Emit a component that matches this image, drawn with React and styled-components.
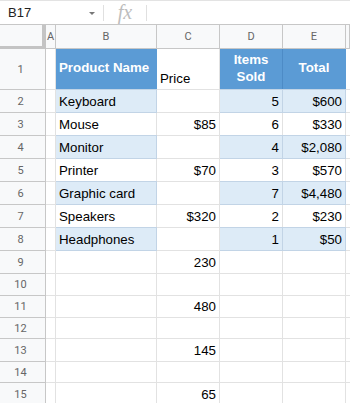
import React from 'react';
import styled, { createGlobalStyle, css } from 'styled-components';

const GlobalStyle = createGlobalStyle`
  html, body { margin: 0; padding: 0; background: #fff; }
  body { font-family: "Liberation Sans", Arial, sans-serif; }
  * { box-sizing: border-box; }
`;

const COLS = '46px 10px 101px 63px 63px 63px 1fr';

const Page = styled.div`
  width: 350px;
  height: 403px;
  overflow: hidden;
  background: #fff;
`;

const FormulaBar = styled.div`
  display: flex;
  align-items: center;
  height: 25px;
  border-top: 1px solid #e3e3e3;
  border-bottom: 1px solid #c7c7c7;
`;

const NameBox = styled.div`
  width: 103px;
  display: flex;
  align-items: center;
  justify-content: space-between;
  padding: 0 8px 0 8px;
  font-size: 13px;
  color: #222;
`;

const Caret = styled.span`
  width: 0;
  height: 0;
  border-left: 3px solid transparent;
  border-right: 3px solid transparent;
  border-top: 3px solid #777;
  margin-top: 2px;
`;

const Divider = styled.div`
  width: 1px;
  height: 16px;
  background: #e0e0e0;
`;

const Fx = styled.div`
  width: 42px;
  text-align: center;
  font-family: "Liberation Serif", "Times New Roman", serif;
  font-style: italic;
  font-size: 20px;
  color: #bdbdbd;
  line-height: 20px;
  padding-bottom: 2px;
`;

const Row = styled.div`
  display: grid;
  grid-template-columns: ${COLS};
  height: ${(p) => p.$h}px;
`;

const Corner = styled.div`
  background: #f8f9fa;
  border-right: 4px solid #c4c4c4;
  border-bottom: 3px solid #c4c4c4;
`;

const ColHead = styled.div`
  background: #f8f9fa;
  border-right: 1px solid #c7c7c7;
  border-bottom: 1px solid #c7c7c7;
  display: flex;
  align-items: center;
  justify-content: center;
  font-family: Roboto, "Liberation Sans", sans-serif;
  font-size: 11px;
  color: #666;
`;

const RowHead = styled.div`
  background: #f8f9fa;
  border-right: 1px solid #c7c7c7;
  border-bottom: 1px solid #c7c7c7;
  display: flex;
  align-items: center;
  justify-content: center;
  padding-right: 4px;
  font-family: Roboto, "Liberation Sans", sans-serif;
  font-size: 11px;
  color: #666;
`;

const fills = {
  head: css`
    background: #5b9bd5;
    color: #fff;
    font-weight: bold;
    border-right-color: #5b9bd5;
    border-bottom-color: #5b9bd5;
  `,
  light: css`
    background: #ddebf7;
    border-right-color: #c2d4e6;
    border-bottom-color: #c2d4e6;
    box-shadow: 0 -1px 0 #c2d4e6;
  `,
};

const Cell = styled.div`
  display: flex;
  align-items: ${(p) => p.$v || 'flex-end'};
  justify-content: ${(p) => p.$align || 'flex-start'};
  text-align: ${(p) => (p.$align === 'center' ? 'center' : 'left')};
  padding: 0 3px 2px 3px;
  border-right: 1px solid #e2e2e2;
  border-bottom: 1px solid #e2e2e2;
  font-size: 13.3px;
  line-height: 16px;
  color: #000;
  white-space: nowrap;
  ${(p) => p.$fill && fills[p.$fill]}
  ${(p) => p.$divide && css`border-right-color: #4d8bc6;`}
`;

const HeadText = styled.span`
  white-space: normal;
  line-height: 17px;
  padding-bottom: 1px;
`;

const products = [
  ['Keyboard', '', '5', '$600'],
  ['Mouse', '$85', '6', '$330'],
  ['Monitor', '', '4', '$2,080'],
  ['Printer', '$70', '3', '$570'],
  ['Graphic card', '', '7', '$4,480'],
  ['Speakers', '$320', '2', '$230'],
  ['Headphones', '', '1', '$50'],
];

const extra = [
  [9, 23, '230'],
  [10, 22, ''],
  [11, 22, '480'],
  [12, 21, ''],
  [13, 23, '145'],
  [14, 21, ''],
  [15, 23, '65'],
];

export default function App() {
  return (
    <Page>
      <GlobalStyle />
      <FormulaBar>
        <NameBox>
          B17
          <Caret />
        </NameBox>
        <Divider />
        <Fx>fx</Fx>
        <Divider />
      </FormulaBar>

      <Row $h={24}>
        <Corner />
        {['A', 'B', 'C', 'D', 'E', ''].map((l, i) => (
          <ColHead key={i}>{l}</ColHead>
        ))}
      </Row>

      <Row $h={41}>
        <RowHead>1</RowHead>
        <Cell />
        <Cell $fill="head" $v="center">Product Name</Cell>
        <Cell>Price</Cell>
        <Cell $fill="head" $v="center" $align="center" $divide>
          <HeadText>Items<br />Sold</HeadText>
        </Cell>
        <Cell $fill="head" $v="center" $align="center">Total</Cell>
        <Cell />
      </Row>

      {products.map(([name, price, sold, total], i) => {
        const fill = i % 2 === 0 ? 'light' : undefined;
        return (
          <Row $h={23} key={name}>
            <RowHead>{i + 2}</RowHead>
            <Cell />
            <Cell $fill={fill}>{name}</Cell>
            <Cell $align="flex-end">{price}</Cell>
            <Cell $fill={fill} $align="flex-end">{sold}</Cell>
            <Cell $fill={fill} $align="flex-end">{total}</Cell>
            <Cell />
          </Row>
        );
      })}

      {extra.map(([n, h, v]) => (
        <Row $h={h} key={n}>
          <RowHead>{n}</RowHead>
          <Cell />
          <Cell />
          <Cell $align="flex-end">{v}</Cell>
          <Cell />
          <Cell />
          <Cell />
        </Row>
      ))}
    </Page>
  );
}
